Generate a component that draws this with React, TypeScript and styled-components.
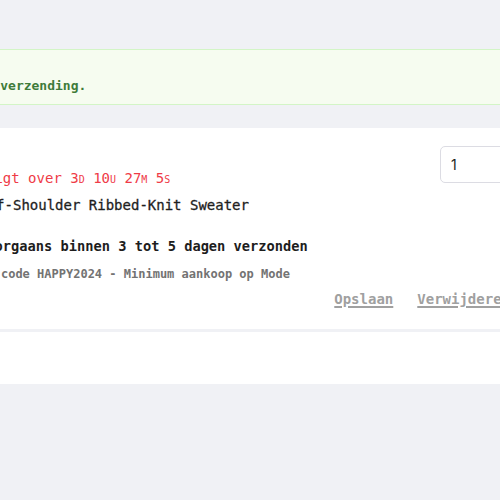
import React from "react";
import styled, { createGlobalStyle } from "styled-components";
import { Clock } from "lucide-react";

const GlobalStyle = createGlobalStyle`
  html, body {
    margin: 0;
    padding: 0;
    overflow: hidden;
    background: #f0f1f5;
  }
  body {
    font-family: "DejaVu Sans Mono", "Liberation Mono", monospace;
  }
`;

const Page = styled.div`
  display: flex;
  justify-content: center;
  padding-top: 49px;
  min-height: 100vh;
  box-sizing: border-box;
`;

const Container = styled.div`
  width: 1000px;
  flex-shrink: 0;
  display: flex;
  flex-direction: column;
  gap: 23px;
`;

const Banner = styled.div`
  background: #f6fcf0;
  border-top: 1px solid #d3f5c6;
  border-bottom: 1px solid #d3f5c6;
  padding: 9px 24px 9px 31.1px;
  display: flex;
  flex-direction: column;
  color: #3e7b3a;
  font-size: 13px;
  line-height: 18px;
  font-weight: bold;
`;

const BannerLine = styled.div``;

const Card = styled.div`
  background: #ffffff;
  display: flex;
  flex-direction: column;
`;

const Item = styled.div`
  display: grid;
  grid-template-columns: 130.7px 1fr 192px;
  column-gap: 24px;
  padding: 18px 24px 20px;
`;

const ProductImage = styled.div`
  width: 130px;
  height: 130px;
  border-radius: 4px;
  background: #ececef;
`;

const Main = styled.div`
  display: flex;
  flex-direction: column;
  min-width: 0;
`;

const TopRow = styled.div`
  display: flex;
  align-items: flex-start;
  gap: 16px;
`;

const Info = styled.div`
  flex: 1;
  padding-top: 22px;
  display: flex;
  flex-direction: column;
  gap: 5px;
`;

const TimerRow = styled.div`
  display: flex;
  align-items: center;
  gap: 12px;
  color: #ef3b47;
  font-size: 14px;
  line-height: 20px;
  white-space: pre;
`;

const Unit = styled.span`
  font-size: 10px;
  text-transform: uppercase;
`;

const Title = styled.div`
  font-size: 14px;
  line-height: 20px;
  color: #1f1f1f;
  white-space: nowrap;
  -webkit-text-stroke: 0.3px #1f1f1f;
`;

const QtyInput = styled.input`
  flex-shrink: 0;
  width: 70px;
  height: 37px;
  box-sizing: border-box;
  border: 1px solid #dcdce3;
  border-radius: 5px;
  padding: 0 10px;
  font-family: Inter, "Noto Sans", sans-serif;
  font-size: 14px;
  color: #222222;
  background: #ffffff;
  outline: none;
`;

const Shipping = styled.div`
  margin-top: 21.3px;
  font-size: 13.7px;
  line-height: 20px;
  font-weight: bold;
  color: #1d1d1d;
  white-space: nowrap;
`;

const Promo = styled.div`
  margin-top: 8.7px;
  font-size: 12px;
  line-height: 18px;
  font-weight: bold;
  color: #737373;
  white-space: nowrap;
`;

const Actions = styled.div`
  margin-top: 6px;
  display: flex;
  justify-content: flex-end;
  gap: 24px;
`;

const ActionLink = styled.button`
  background: none;
  border: none;
  padding: 0;
  font-family: "DejaVu Sans Mono", monospace;
  font-size: 14px;
  line-height: 20px;
  font-weight: bold;
  color: #a0a0a0;
  text-decoration: underline;
  text-decoration-thickness: 2px;
  text-underline-offset: 2px;
  cursor: pointer;
`;

const PriceCol = styled.div`
  display: flex;
  flex-direction: column;
  align-items: flex-end;
  padding-top: 8px;
  font-size: 16px;
  font-weight: bold;
  color: #222222;
`;

const Divider = styled.div`
  height: 3px;
  background: #f0f1f5;
`;

const Footer = styled.div`
  height: 52px;
  display: flex;
  justify-content: flex-end;
  align-items: center;
  padding: 0 24px;
  font-size: 14px;
  color: #222222;
`;

export default function App() {
  return (
    <>
      <GlobalStyle />
      <Page>
        <Container>
          <Banner>
            <BannerLine>Gefeliciteerd!</BannerLine>
            <BannerLine>Je bestelling krijgt gratis verzending.</BannerLine>
          </Banner>
          <Card>
            <Item>
              <ProductImage />
              <Main>
                <TopRow>
                  <Info>
                    <TimerRow>
                      <Clock size={20} />
                      <span>
                        Eindigt over 3<Unit>d</Unit> 10<Unit>u</Unit> 27<Unit>m</Unit> 5<Unit>s</Unit>
                      </span>
                    </TimerRow>
                    <Title>Witte Off-Shoulder Ribbed-Knit Sweater</Title>
                  </Info>
                  <QtyInput type="text" value="1" readOnly aria-label="Aantal" />
                </TopRow>
                <Shipping>Wordt doorgaans binnen 3 tot 5 dagen verzonden</Shipping>
                <Promo>Actie met code HAPPY2024 - Minimum aankoop op Mode</Promo>
                <Actions>
                  <ActionLink>Opslaan</ActionLink>
                  <ActionLink>Verwijderen</ActionLink>
                </Actions>
              </Main>
              <PriceCol>€ 39,95</PriceCol>
            </Item>
            <Divider />
            <Footer>Subtotaal € 39,95</Footer>
          </Card>
        </Container>
      </Page>
    </>
  );
}
